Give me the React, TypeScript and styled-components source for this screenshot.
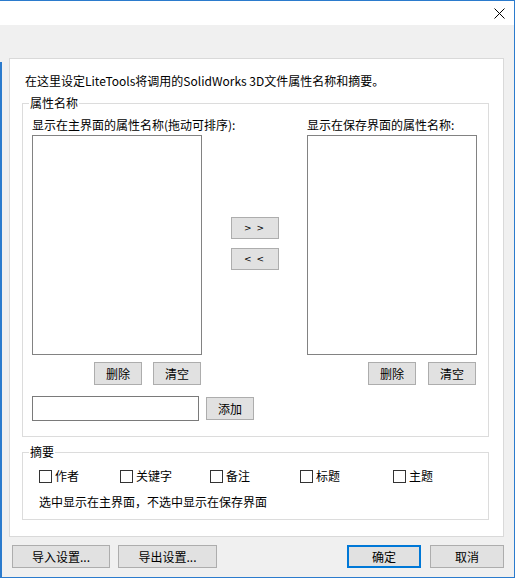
import React from 'react';
import styled, { createGlobalStyle } from 'styled-components';

const GlobalStyle = createGlobalStyle`
  html, body {
    margin: 0;
    padding: 0;
    background: #ffffff;
  }
  body {
    font-family: "Noto Sans CJK SC", "Noto Sans", sans-serif;
    font-size: 12px;
    color: #000000;
  }
`;

const ACCENT = '#2b7bcd';

const Window = styled.div`
  width: 515px;
  height: 578px;
  box-sizing: border-box;
  border-top: 1px solid ${ACCENT};
  border-right: 1px solid ${ACCENT};
  border-bottom: 1px solid ${ACCENT};
  background: #f0f0f0;
  display: flex;
  flex-direction: column;
`;

const TitleBar = styled.div`
  height: 24px;
  background: #ffffff;
  display: flex;
  justify-content: flex-end;
  align-items: center;
  padding-right: 9px;
`;

const TopGap = styled.div`
  height: 33px;
`;

const Main = styled.div`
  flex: 1;
  display: flex;
`;

// cropped edge of the neighbouring control, only a blue strip is visible
const Rail = styled.div`
  width: 9px;
  display: flex;
  flex-direction: column;
  padding-top: 4px;
  box-sizing: border-box;
  &::before {
    content: '';
    flex: 1;
    width: 2px;
    background: ${ACCENT};
  }
`;

const Content = styled.div`
  width: 495px;
  display: flex;
  flex-direction: column;
`;

const Panel = styled.div`
  background: #ffffff;
  border: 1px solid #d9d9d9;
  padding: 14px 14px 16px 12px;
  display: flex;
  flex-direction: column;
`;

const Intro = styled.div`
  line-height: 16px;
  padding-left: 3px;
  margin-bottom: 6px;
  white-space: nowrap;
`;

const Group = styled.fieldset<{ $gapTop?: number }>`
  margin: ${({ $gapTop }) => $gapTop || 0}px 0 0 0;
  padding: 0;
  min-width: 0;
  border: 1px solid #dcdcdc;
`;

const Legend = styled.legend`
  margin-left: 6px;
  padding: 0 1px;
  line-height: 16px;
`;

const NamesBody = styled.div`
  padding: 6px 11px 15px 9px;
  display: grid;
  grid-template-columns: 170px 1fr 170px;
  align-items: start;
`;

const ColLabel = styled.div`
  line-height: 16px;
  white-space: nowrap;
`;

const ListBox = styled.div<{ $col: number }>`
  grid-column: ${({ $col }) => $col};
  margin-top: 2px;
  height: 220px;
  box-sizing: border-box;
  border: 1px solid #828282;
  background: #ffffff;
`;

const MoveColumn = styled.div`
  grid-row: 2;
  grid-column: 2;
  align-self: stretch;
  display: flex;
  flex-direction: column;
  align-items: center;
  justify-content: center;
  gap: 9px;
  padding-bottom: 2px;
`;

const ButtonRow = styled.div<{ $gap: number; $col: number }>`
  grid-column: ${({ $col }) => $col};
  margin-top: 7px;
  display: flex;
  justify-content: flex-end;
  gap: ${({ $gap }) => $gap}px;
  padding-right: 1px;
`;

const Button = styled.button<{ $w: number; $h?: number; $primary?: boolean }>`
  width: ${({ $w }) => $w}px;
  height: ${({ $h }) => $h || 23}px;
  box-sizing: border-box;
  padding: 0;
  margin: 0;
  background: #e1e1e1;
  border: ${({ $primary }) => ($primary ? '2px solid #0078d7' : '1px solid #adadad')};
  border-radius: 0;
  font-family: "Noto Sans CJK SC", "Noto Sans", sans-serif;
  font-size: 12px;
  line-height: 16px;
  color: #000000;
`;

const ArrowButton = styled(Button)`
  font-family: "DejaVu Sans", sans-serif;
  font-size: 9px;
  letter-spacing: 1px;
`;

const AddRow = styled.div`
  grid-column: 1 / 4;
  margin-top: 11px;
  display: flex;
  align-items: center;
  gap: 7px;
`;

const TextInput = styled.input`
  width: 167px;
  height: 25px;
  box-sizing: border-box;
  margin: 0;
  border: 1px solid #7a7a7a;
  padding: 0 3px;
  font-family: "Noto Sans CJK SC", "Noto Sans", sans-serif;
  font-size: 12px;
  outline: none;
`;

const SummaryBody = styled.div`
  padding: 8px 10px 9px 16px;
  display: flex;
  flex-direction: column;
  gap: 10px;
`;

const CheckRow = styled.div`
  display: grid;
  grid-template-columns: 81px 90px 90px 93px auto;
  line-height: 16px;
`;

const CheckItem = styled.label`
  display: flex;
  align-items: center;
  gap: 3px;
  white-space: nowrap;
`;

const Box = styled.span`
  width: 13px;
  height: 13px;
  box-sizing: border-box;
  border: 1px solid #333333;
  background: #ffffff;
`;

const Note = styled.div`
  line-height: 16px;
`;

const Footer = styled.div`
  display: flex;
  padding: 8px 0 0 3px;
  gap: 8px;
`;

const Spacer = styled.div`
  flex: 1;
`;

function CloseIcon() {
  return (
    <svg width="11" height="11" viewBox="0 0 11 11">
      <path d="M0.5 0.5 L10.5 10.5 M10.5 0.5 L0.5 10.5" stroke="#000" strokeWidth="1" />
    </svg>
  );
}

const summaryItems = ['作者', '关键字', '备注', '标题', '主题'];

function App() {
  return (
    <>
      <GlobalStyle />
      <Window>
        <TitleBar>
          <CloseIcon />
        </TitleBar>
        <TopGap />
        <Main>
          <Rail />
          <Content>
            <Panel>
              <Intro>在这里设定LiteTools将调用的SolidWorks 3D文件属性名称和摘要。</Intro>
              <Group>
                <Legend>属性名称</Legend>
                <NamesBody>
                  <ColLabel>显示在主界面的属性名称(拖动可排序):</ColLabel>
                  <div />
                  <ColLabel>显示在保存界面的属性名称:</ColLabel>
                  <ListBox $col={1} />
                  <MoveColumn>
                    <ArrowButton $w={48} $h={22}>&gt; &gt;</ArrowButton>
                    <ArrowButton $w={48} $h={22}>&lt; &lt;</ArrowButton>
                  </MoveColumn>
                  <ListBox $col={3} />
                  <ButtonRow $gap={11} $col={1}>
                    <Button $w={48}>删除</Button>
                    <Button $w={48}>清空</Button>
                  </ButtonRow>
                  <ButtonRow $gap={12} $col={3}>
                    <Button $w={48}>删除</Button>
                    <Button $w={48}>清空</Button>
                  </ButtonRow>
                  <AddRow>
                    <TextInput />
                    <Button $w={48}>添加</Button>
                  </AddRow>
                </NamesBody>
              </Group>
              <Group $gapTop={7}>
                <Legend>摘要</Legend>
                <SummaryBody>
                  <CheckRow>
                    {summaryItems.map((item) => (
                      <CheckItem key={item}>
                        <Box />
                        {item}
                      </CheckItem>
                    ))}
                  </CheckRow>
                  <Note>选中显示在主界面，不选中显示在保存界面</Note>
                </SummaryBody>
              </Group>
            </Panel>
            <Footer>
              <Button $w={98}>导入设置...</Button>
              <Button $w={99}>导出设置...</Button>
              <Spacer />
              <Button $w={74} $primary>确定</Button>
              <Button $w={74} style={{ marginLeft: 1 }}>取消</Button>
            </Footer>
          </Content>
        </Main>
      </Window>
    </>
  );
}

export default App;
